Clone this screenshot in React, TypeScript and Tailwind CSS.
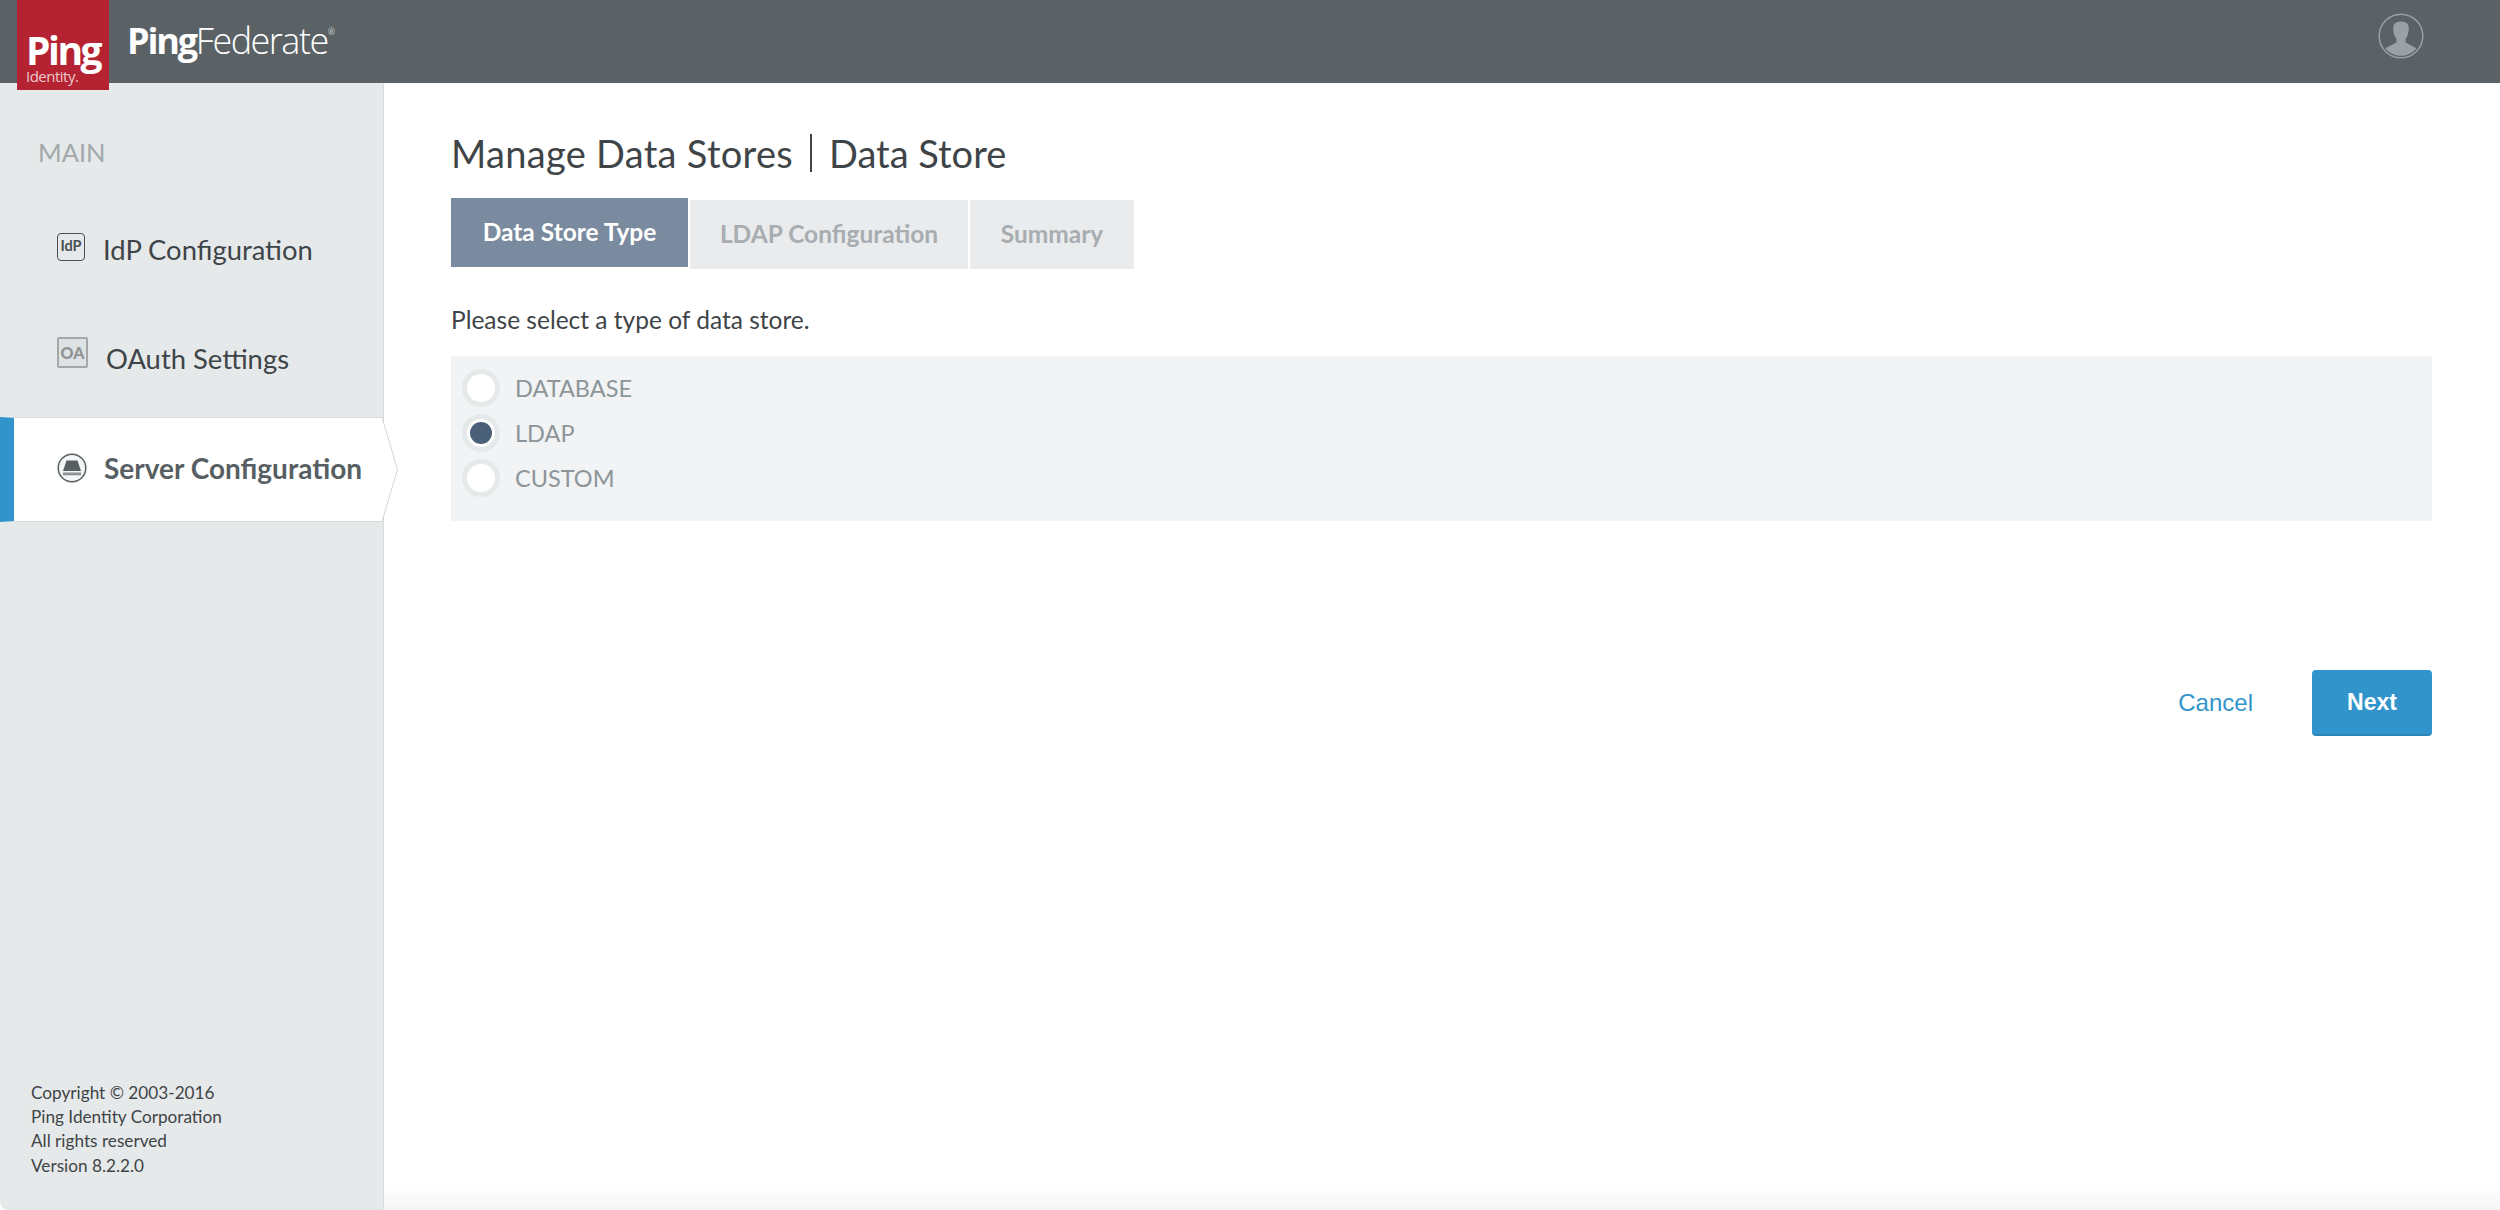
const options = [
  { label: "DATABASE", checked: false },
  { label: "LDAP", checked: true },
  { label: "CUSTOM", checked: false },
];

function ProfileIcon() {
  return (
    <svg width="46" height="46" viewBox="0 0 46 46" fill="none">
      <circle cx="23" cy="23" r="21.8" stroke="#99a1a8" strokeWidth="1.5" />
      <path
        d="M23 8.500c-5 0-7.800 2.200-7.800 6.500 0 4.600 1.300 8.800 3.300 11.300v2.700c-1.500 2-7.500 3.600-11 6.500 3.600 4.400 9.200 7.300 15.500 7.300s11.900-2.900 15.500-7.300c-3.500-2.900-9.500-4.500-11-6.500v-2.700c2-2.500 3.300-6.700 3.300-11.300 0-4.300-2.800-6.500-7.800-6.500z"
        fill="#99a1a8"
      />
    </svg>
  );
}

function ServerIcon() {
  return (
    <svg width="30" height="30" viewBox="0 0 30 30" fill="none">
      <circle cx="15" cy="15" r="13.800" stroke="#575f63" strokeWidth="1.500" fill="#f4f5f5" />
      <path d="M9.500 7.500h11l3.500 10.500H6z" fill="#575f63" />
      <rect x="6" y="19.500" width="18" height="2.800" fill="#8a9094" />
    </svg>
  );
}

export default function App() {
  return (
    <div className="flex h-screen flex-col overflow-hidden bg-white font-[family-name:Lato,sans-serif]">
      {/* top bar */}
      <header className="flex h-[83px] shrink-0 items-start justify-between bg-[#5b6266]">
        <div className="flex items-start">
          <div className="relative z-10 ml-[17px] flex h-[90px] w-[92px] flex-col bg-[#b52332] pl-[9px] pt-[31px] text-white">
            <span className="font-[family-name:'Open_Sans',sans-serif] text-[39px] font-bold leading-[37px] tracking-[-2.500px]">Ping</span>
            <span className="font-[family-name:'Open_Sans',sans-serif] text-[15px] leading-[16px] tracking-[-0.500px] text-[#ecc8cc]">Identity.</span>
          </div>
          <div className="ml-[18px] mt-[18px] flex items-start text-white">
            <span className="font-[family-name:'Open_Sans',sans-serif] text-[36px] font-bold leading-[46px] tracking-[-2.200px]">Ping</span>
            <span className="font-[family-name:'Open_Sans',sans-serif] text-[36px] font-light leading-[46px] tracking-[-1.500px]">Federate</span>
            <span className="mt-[9px] text-[9px] leading-[10px] text-[#c8cccd]">®</span>
          </div>
        </div>
        <div className="mr-[76px] mt-[13px]">
          <ProfileIcon />
        </div>
      </header>

      <div className="flex min-h-0 flex-1">
        {/* sidebar */}
        <aside className="flex w-[384px] shrink-0 flex-col justify-between rounded-bl-[8px] border-r border-[#d9dcdd] bg-[#e6e9ea]">
          <div>
            <div className="pl-[38px] pt-[54px] text-[25.500px] leading-[30px] text-[#a2a8ab]">MAIN</div>
            <nav className="mt-[30px] flex flex-col">
              <a className="flex h-[105px] items-center pl-[57px] text-[27.400px] text-[#3e4447]">
                <span className="-mt-[6px] mr-[18px] flex h-[28px] w-[28px] items-center justify-center rounded-[4px] border-[1.500px] border-[#4a5053] text-[14.500px] font-bold leading-none text-[#4a5053]">
                  IdP
                </span>
                IdP Configuration
              </a>
              <a className="mt-[4px] flex h-[105px] items-center pl-[57px] text-[27.400px] text-[#3e4447]">
                <span className="-mt-[12px] mr-[18px] flex h-[31px] w-[31px] items-center justify-center rounded-[2px] border-2 border-[#a3a7a9] bg-[#dfe2e3] text-[16px] font-black leading-none text-[#8e9396]">
                  OA
                </span>
                OAuth Settings
              </a>
              <div className="relative mt-[6px]">
                <a className="flex h-[105px] items-center border-y border-[#d9dcdd] border-l-[14px] border-l-[#3195cb] bg-white pl-[43px] text-[28px] font-bold text-[#575f63]">
                  <span className="-mt-[3px] mr-[17px] block h-[30px]">
                    <ServerIcon />
                  </span>
                  <span className="-mt-[4px]">Server Configuration</span>
                </a>
                <svg className="absolute left-[382px] top-0" width="17" height="105" viewBox="0 0 17 105" fill="none">
                  <path d="M0 0.500 15.500 52.500 0 104.500z" fill="#fff" />
                  <path d="M0 0.500 15.500 52.500 0 104.500" stroke="#d2d6d7" strokeWidth="1" />
                </svg>
              </div>
            </nav>
          </div>
          <div className="pb-[32px] pl-[31px] text-[17.200px] leading-[24.300px] text-[#3e4447]">
            <div>Copyright © 2003-2016</div>
            <div>Ping Identity Corporation</div>
            <div>All rights reserved</div>
            <div>Version 8.2.2.0</div>
          </div>
        </aside>

        {/* main content */}
        <main className="relative flex-1 pl-[67px] pr-[68px] pt-[47px]">
          <h1 className="flex h-[46px] items-center text-[38px] font-normal leading-[46px] text-[#3e4447]">
            <span className="tracking-[0.300px]">Manage Data Stores</span>
            <span className="mx-[17px] h-[38px] w-[2px] bg-[#3e4447]"></span>
            <span>Data Store</span>
          </h1>

          <div className="mt-[22px] flex items-start gap-[2px] text-[24.500px] font-bold">
            <div className="flex h-[69px] w-[237px] items-center justify-center bg-[#7a8ba0] text-white">Data Store Type</div>
            <div className="mt-[2px] flex h-[69px] w-[278px] items-center justify-center bg-[#e9ebed] text-[#a8adb1]">LDAP Configuration</div>
            <div className="mt-[2px] flex h-[69px] w-[164px] items-center justify-center bg-[#e9ebed] text-[#a8adb1]">Summary</div>
          </div>

          <p className="mt-[35px] text-[24.500px] leading-[32px] text-[#3e4447]">Please select a type of data store.</p>

          <div className="mt-[20px] flex h-[165px] flex-col gap-[7px] bg-[#f1f3f4] pl-[11px] pt-[13px]">
            {options.map((o) => (
              <label key={o.label} className="flex h-[38px] items-center text-[23.500px] text-[#8d9599]">
                <span className="mr-[15px] flex h-[38px] w-[38px] items-center justify-center rounded-full border-[5px] border-[#e6e9ea] bg-white">
                  {o.checked && <span className="h-[22px] w-[22px] rounded-full bg-[#4a6078]"></span>}
                </span>
                <span className="mt-[1px]">{o.label}</span>
              </label>
            ))}
          </div>

          <div className="mt-[149px] flex items-center justify-end font-[family-name:'Liberation_Sans',sans-serif]">
            <a className="mr-[59px] text-[24px] text-[#3195cb]">Cancel</a>
            <button className="h-[66px] w-[120px] rounded-[4px] border-b-2 border-[#2b86b8] bg-[#3195cb] text-[23px] font-bold text-white">Next</button>
          </div>

          <div className="absolute inset-x-0 bottom-0 h-[24px] bg-gradient-to-b from-white to-[#f5f5f5]"></div>
        </main>
      </div>
    </div>
  );
}
